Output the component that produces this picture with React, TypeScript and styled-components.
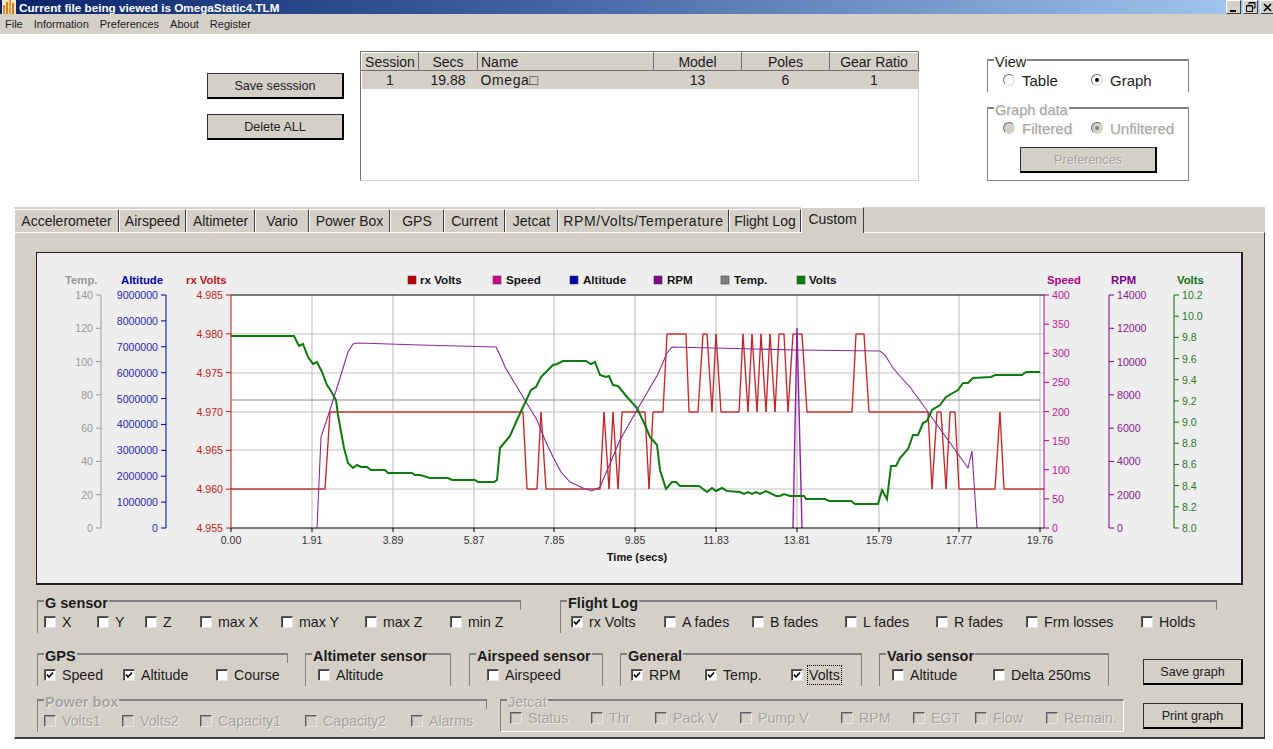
import styled, { createGlobalStyle } from 'styled-components';

const FACE = '#d4d0c8';

const GlobalStyle = createGlobalStyle`
  html, body {
    margin: 0;
    padding: 0;
    background: #fff;
  }
  body {
    font-family: "Liberation Sans", Arial, sans-serif;
    color: #1c1c1c;
  }
`;

const Window = styled.div`
  width: 1273px;
  height: 749px;
  overflow: hidden;
  background: #fff;
`;

const TitleBar = styled.div`
  height: 14px;
  display: flex;
  align-items: center;
  padding-left: 2px;
  background: linear-gradient(90deg, #0a246a 0%, #3d5f9f 40%, #a6caf0 100%);
  color: #fff;
  font-size: 11.7px;
  font-weight: bold;
`;

const TitleText = styled.span`
  margin-left: 3px;
  flex: 1;
`;

const WinButtons = styled.div`
  display: flex;
  gap: 2px;
  margin-right: -2px;
`;

const WinButton = styled.div`
  width: 15px;
  height: 14px;
  box-sizing: border-box;
  background: ${FACE};
  border: 1px solid;
  border-color: #fff #404040 #404040 #fff;
  display: flex;
  align-items: center;
  justify-content: center;
`;

const MenuBar = styled.div`
  height: 20px;
  display: flex;
  align-items: center;
  gap: 11px;
  padding-left: 5px;
  background: ${FACE};
  font-size: 11px;
`;

const TopArea = styled.div`
  height: 173px;
  display: flex;
  align-items: flex-start;
`;

const ButtonColumn = styled.div`
  margin: 39px 0 0 207px;
  display: flex;
  flex-direction: column;
  gap: 15px;
`;

const Button = styled.button<{ $w: number; $h?: number; $mt?: number; $ml?: number }>`
  width: ${(p) => p.$w}px;
  height: ${(p) => p.$h ?? 26}px;
  margin: ${(p) => p.$mt ?? 0}px 0 0 ${(p) => p.$ml ?? 0}px;
  padding: 1px 0 0;
  flex-shrink: 0;
  box-sizing: border-box;
  background: ${FACE};
  border: 1px solid #303030;
  border-right: 2px solid #000;
  border-bottom: 2px solid #000;
  font-family: inherit;
  font-size: 12.6px;
  color: #222;

  &:disabled {
    color: #a2a2a0;
    text-shadow: 1px 1px 0 #ecebe6;
  }
`;

const TableBox = styled.div`
  margin: 17px 0 0 16px;
  width: 559px;
  height: 130px;
  box-sizing: border-box;
  border: 1px solid;
  border-color: #707070 ${FACE} ${FACE} #707070;
`;

const Table = styled.table`
  width: 557px;
  border-collapse: collapse;
  table-layout: fixed;
  font-size: 14px;
`;

const Th = styled.th<{ $left?: boolean }>`
  height: 18px;
  padding: 0 0 0 ${(p) => (p.$left ? 3 : 0)}px;
  box-sizing: border-box;
  font-weight: normal;
  text-align: ${(p) => (p.$left ? 'left' : 'center')};
  background: ${FACE};
  border-top: 1px solid #fff;
  border-left: 1px solid #fff;
  border-right: 1px solid #707070;
  border-bottom: 1px solid #707070;
`;

const Td = styled.td<{ $left?: boolean }>`
  height: 18px;
  padding: 0 0 0 ${(p) => (p.$left ? 3 : 0)}px;
  text-align: ${(p) => (p.$left ? 'left' : 'center')};
  background: ${FACE};
`;

const NameText = styled.span`
  letter-spacing: 0.6px;
`;

const ViewColumn = styled.div`
  margin: 25px 0 0 68px;
  display: flex;
  flex-direction: column;
  gap: 15px;
`;

const Page = styled.div`
  width: 1251px;
  margin-left: 14px;
  background: ${FACE};
`;

const TabStrip = styled.div`
  height: 25px;
  display: flex;
  align-items: flex-start;
`;

const Tab = styled.div<{ $w: number; $active?: boolean; $track?: number }>`
  width: ${(p) => p.$w}px;
  height: ${(p) => (p.$active ? 26 : 23)}px;
  margin-top: ${(p) => (p.$active ? 0 : 2)}px;
  flex-shrink: 0;
  box-sizing: border-box;
  display: flex;
  align-items: center;
  justify-content: center;
  font-size: 14px;
  letter-spacing: ${(p) => p.$track ?? 0}px;
  padding-bottom: ${(p) => (p.$active ? 4 : 0)}px;
  background: ${FACE};
  border-top: 1px solid #fff;
  border-left: 1px solid #fff;
  border-right: 1px solid #404040;
  position: relative;
  z-index: ${(p) => (p.$active ? 1 : 0)};
`;

const PageBody = styled.div`
  height: 507px;
  box-sizing: border-box;
  border-top: 1px solid #fff;
  border-left: 1px solid #fff;
  border-right: 1px solid #404040;
  border-bottom: 2px solid #404040;
  padding: 19px 0 0 21px;
`;

const ChartFrame = styled.div`
  width: 1207px;
  height: 333px;
  box-sizing: border-box;
  background: #eeeeee;
  border: solid #222;
  border-width: 1px 2px 2px 1px;

  svg {
    display: block;
    font-family: "Liberation Sans", Arial, sans-serif;
  }
`;

const GroupRow = styled.div<{ $mt: number }>`
  display: flex;
  align-items: flex-start;
  height: 33px;
  margin-top: ${(p) => p.$mt}px;
`;

const Group = styled.div<{ $w: number; $h?: number; $ml?: number; $pt?: number; $bg?: string; $light?: boolean }>`
  position: relative;
  width: ${(p) => p.$w}px;
  height: ${(p) => p.$h ?? 33}px;
  margin-left: ${(p) => p.$ml ?? 0}px;
  flex-shrink: 0;
  box-sizing: border-box;
  padding-top: ${(p) => p.$pt ?? 8}px;
  background: ${(p) => p.$bg ?? FACE};
  border: 1px solid #808080;
  border-top-width: 2px;
  ${(p) => p.$light && 'border-color: #808080 #fff #fff #808080;'}
`;

const GroupLabel = styled.span<{ $bold?: boolean; $off?: boolean }>`
  position: absolute;
  top: -7px;
  left: 6px;
  padding: 0 1px;
  line-height: 16px;
  background: inherit;
  font-size: 14.5px;
  font-weight: ${(p) => (p.$bold ? 'bold' : 'normal')};
  color: ${(p) => (p.$off ? '#a4a4a0' : '#1c1c1c')};
  ${(p) => p.$off && 'text-shadow: 1px 1px 0 #ecebe6;'}
`;

const ItemRow = styled.div`
  display: flex;
  align-items: flex-start;
  background: inherit;
`;

const Item = styled.div<{ $w: number; $ml: number; $pad: number; $closed?: boolean; $off?: boolean }>`
  width: ${(p) => p.$w}px;
  height: ${(p) => (p.$closed ? 18 : 24)}px;
  margin-left: ${(p) => p.$ml}px;
  padding-left: ${(p) => p.$pad}px;
  flex-shrink: 0;
  box-sizing: border-box;
  display: flex;
  align-items: center;
  background: ${(p) => (p.$closed ? 'transparent' : 'inherit')};
  font-size: 14.2px;
  white-space: nowrap;
  color: ${(p) => (p.$off ? '#a4a4a0' : '#1c1c1c')};
  ${(p) => p.$off && 'text-shadow: 1px 1px 0 #ecebe6;'}
`;

const Check = styled.span<{ $off?: boolean }>`
  width: 12px;
  height: 12px;
  flex-shrink: 0;
  box-sizing: border-box;
  display: flex;
  align-items: center;
  justify-content: center;
  margin-right: 6px;
  background: ${(p) => (p.$off ? FACE : '#fff')};
  border: 1px solid;
  border-color: #5a5a5a #e8e6e0 #e8e6e0 #5a5a5a;
  box-shadow: inset 1px 1px 0 ${(p) => (p.$off ? '#a0a0a0' : '#404040')};
`;

const Radio = styled.span<{ $off?: boolean }>`
  width: 12px;
  height: 12px;
  flex-shrink: 0;
  box-sizing: border-box;
  display: flex;
  align-items: center;
  justify-content: center;
  margin-right: 7px;
  border-radius: 50%;
  background: ${(p) => (p.$off ? FACE : '#fff')};
  border: 1px solid;
  border-color: #6a6a6a #dcdad4 #dcdad4 #6a6a6a;
`;

const RadioDot = styled.span<{ $off?: boolean }>`
  width: 4px;
  height: 4px;
  border-radius: 50%;
  background: ${(p) => (p.$off ? '#808080' : '#000')};
`;

const ItemText = styled.span<{ $focus?: boolean; $big?: boolean }>`
  font-size: ${(p) => (p.$big ? 15 : 14.2)}px;
  ${(p) => p.$focus && 'outline: 1px dotted #000; outline-offset: 1px;'}
`;

type ItemDef = { t: string; l: number; r: number; cb?: number; on?: boolean; focus?: boolean };

const options = (x: number, items: ItemDef[], flags: { closed?: boolean; off?: boolean; radio?: boolean }) => {
  let prev = x + 1;
  return (
    <ItemRow>
      {items.map((it) => {
        const ml = it.l - prev;
        prev = it.r;
        return (
          <Item
            key={it.t}
            $ml={ml}
            $w={it.r - it.l}
            $pad={(it.cb ?? it.l + 1) - it.l}
            $closed={flags.closed}
            $off={flags.off}
          >
            {flags.radio ? (
              <Radio $off={flags.off}>{it.on && <RadioDot $off={flags.off} />}</Radio>
            ) : (
              <Check $off={flags.off}>
                {it.on && (
                  <svg width='8' height='8' viewBox='0 0 8 8'>
                    <path d='M1 3.5 L3 6 L7 1.5' fill='none' stroke='#000' strokeWidth='1.7' />
                  </svg>
                )}
              </Check>
            )}
            <ItemText $focus={it.focus} $big={flags.radio}>
              {it.t}
            </ItemText>
          </Item>
        );
      })}
    </ItemRow>
  );
};

const TABS: [string, number, number?][] = [
  ['Accelerometer', 105],
  ['Airspeed', 67],
  ['Altimeter', 69],
  ['Vario', 54],
  ['Power Box', 81],
  ['GPS', 54],
  ['Current', 61],
  ['Jetcat', 53],
  ['RPM/Volts/Temperature', 171, 0.6],
  ['Flight Log', 72],
  ['Custom', 63],
];

const P = (s: string) => s;

const GREEN = P(
  '231,336 294,336 299,346 303,344 308,357 313,364 317,362 322,372 327,385 331,391 336,400 338,415 344,448 348,463 353,468 357,465 361,467 367,467 371,470 385,470 388,473 412,473 415,475 420,475 430,478 448,478 452,480 475,480 478,482 494,482 497,480 500,448 505,442 510,436 517,420 531,390 536,387 541,377 553,365 557,364 563,361 586,361 591,364 595,362 600,375 606,377 609,376 613,385 618,386 627,397 637,408 645,425 650,437 657,445 660,470 666,489 672,482 676,482 680,486 699,486 707,492 712,488 716,491 722,488 727,491 740,492 744,494 748,492 752,494 756,492 760,494 766,491 776,496 780,496 784,494 790,496 804,496 806,499 825,499 829,501 851,501 855,504 878,504 882,490 887,499 891,466 896,466 900,458 908,449 913,435 918,435 923,423 927,421 932,410 940,405 946,397 958,390 963,383 968,383 973,378 991,377 995,375 1022,375 1026,372 1040,372'
);

const RED = P(
  '231,489 325,489 330,412 523,412 527,489 537,489 541,412 546,489 600,489 604,412 609,489 613,412 618,489 622,412 645,412 649,489 653,412 663,412 667,334 686,334 689,412 698,412 703,334 707,334 712,412 716,334 721,412 739,412 743,334 748,412 752,334 757,412 761,334 766,412 770,334 775,412 779,334 784,334 788,412 793,334 802,334 807,412 852,412 856,334 864,334 869,412 928,412 932,489 937,412 941,412 946,489 950,412 955,412 959,489 995,489 1000,412 1004,489 1044,489'
);

const PURPLE_A = P(
  '317,528 321,437 330,410 340,378 348,352 353,344 358,343 420,345 496,347 500,355 505,367 520,392 537,420 545,440 553,457 561,472 570,482 583,488 592,491 600,487 620,440 637,410 658,374 667,353 672,347 713,348 797,350 880,351 885,355 893,368 898,374 910,387 928,412 968,468 972,451 977,528'
);
const PURPLE_SPIKE = P('793,528 797,328 802,528');

const XTICKS: [number, string][] = [
  [231, '0.00'],
  [312, '1.91'],
  [393, '3.89'],
  [474, '5.87'],
  [554, '7.85'],
  [635, '9.85'],
  [716, '11.83'],
  [797, '13.81'],
  [879, '15.79'],
  [959, '17.77'],
  [1040, '19.76'],
];

const TOP = 295;
const BOTTOM = 528;

type AxisDef = {
  title: string;
  titleX: number;
  x: number;
  side: 'left' | 'right';
  line: string;
  text: string;
  labels: string[];
};

const range = (from: number, step: number, n: number, digits = 0) =>
  Array.from({ length: n }, (_, i) => (from + i * step).toFixed(digits));

const AXES: AxisDef[] = [
  { title: 'Temp.', titleX: 65, x: 101, side: 'left', line: '#999', text: '#999', labels: range(0, 20, 8) },
  { title: 'Altitude', titleX: 121, x: 166, side: 'left', line: '#0000aa', text: '#2a2ab0', labels: range(0, 1000000, 10) },
  { title: 'rx Volts', titleX: 186, x: 231, side: 'left', line: '#b81818', text: '#c02020', labels: range(4.955, 0.005, 7, 3) },
  { title: 'Speed', titleX: 1047, x: 1044, side: 'right', line: '#b00088', text: '#b82098', labels: range(0, 50, 9) },
  { title: 'RPM', titleX: 1111, x: 1109, side: 'right', line: '#800088', text: '#882090', labels: range(0, 2000, 8) },
  { title: 'Volts', titleX: 1177, x: 1174, side: 'right', line: '#107010', text: '#2a7a2a', labels: range(8, 0.2, 12, 1) },
];

const LEGEND: [string, string, number, number][] = [
  ['rx Volts', '#c00000', 408, 420],
  ['Speed', '#d0008c', 493, 506],
  ['Altitude', '#0000b0', 570, 583],
  ['RPM', '#880088', 654, 667],
  ['Temp.', '#808080', 721, 734],
  ['Volts', '#008000', 797, 809],
];

const Axis = ({ a }: { a: AxisDef }) => {
  const n = a.labels.length - 1;
  const dir = a.side === 'left' ? -1 : 1;
  return (
    <g>
      <text x={a.titleX} y={284} fontSize='11.3' fontWeight='bold' fill={a.line}>
        {a.title}
      </text>
      <line x1={a.x} x2={a.x} y1={TOP} y2={BOTTOM} stroke={a.line} strokeWidth='1' />
      {a.labels.map((l, i) => {
        const y = BOTTOM - (i * (BOTTOM - TOP)) / n;
        return (
          <g key={l}>
            <line x1={a.x} x2={a.x + dir * 5} y1={y} y2={y} stroke={a.line} />
            <text
              x={a.x + dir * 8}
              y={y + 4}
              fontSize='10.6'
              fill={a.text}
              textAnchor={a.side === 'left' ? 'end' : 'start'}
            >
              {l}
            </text>
          </g>
        );
      })}
    </g>
  );
};

const Chart = () => (
  <svg width='1204' height='330' viewBox='37 253 1204 330'>
    <rect x='231' y={TOP} width='813' height={BOTTOM - TOP} fill='#fff' />
    {[334, 373, 412, 450, 489].map((y) => (
      <line key={y} x1='231' x2='1044' y1={y} y2={y} stroke='#c4c4c4' strokeWidth='1.2' />
    ))}
    {XTICKS.slice(1).map(([x]) => (
      <line key={x} x1={x} x2={x} y1={TOP} y2={BOTTOM} stroke='#c4c4c4' strokeWidth='1.2' />
    ))}
    <line x1='231' x2='1040' y1='400' y2='400' stroke='#8c8c8c' strokeWidth='1' />
    <polyline points={RED} fill='none' stroke='#e88080' strokeWidth='1.8' opacity='0.6' />
    <polyline points={RED} fill='none' stroke='#b81c1c' strokeWidth='1' />
    <polyline points={PURPLE_A} fill='none' stroke='#8a2a96' strokeWidth='1.1' />
    <polyline points={PURPLE_SPIKE} fill='none' stroke='#9020a0' strokeWidth='1.4' />
    <polyline points={GREEN} fill='none' stroke='#0e7a0e' strokeWidth='2' />
    <line x1='231' x2='1044' y1={TOP} y2={TOP} stroke='#000' />
    <line x1='231' x2='1044' y1={BOTTOM} y2={BOTTOM} stroke='#000' />
    {AXES.map((a) => (
      <Axis key={a.title} a={a} />
    ))}
    {XTICKS.map(([x, l]) => (
      <g key={l}>
        <line x1={x} x2={x} y1={BOTTOM} y2={BOTTOM + 4} stroke='#000' />
        <text x={x} y={544} fontSize='10.6' fill='#333' textAnchor='middle'>
          {l}
        </text>
      </g>
    ))}
    <text x='637' y='561' fontSize='11' fontWeight='bold' fill='#111' textAnchor='middle'>
      Time (secs)
    </text>
    {LEGEND.map(([t, c, sx, tx]) => (
      <g key={t}>
        <rect x={sx} y='276' width='8' height='8' fill={c} stroke='#444' strokeWidth='0.6' />
        <text x={tx} y='284' fontSize='11.6' fontWeight='bold' fill='#111'>
          {t}
        </text>
      </g>
    ))}
  </svg>
);

export default function App() {
  return (
    <Window>
      <GlobalStyle />
      <TitleBar>
        <svg width='14' height='14' viewBox='0 0 14 14'>
          <rect width='14' height='14' fill='#f4e6c8' />
          <rect x='1' y='5' width='2' height='9' fill='#e08a20' />
          <rect x='4' y='2' width='2' height='12' fill='#d87818' />
          <rect x='7' y='0' width='2' height='14' fill='#e89830' />
          <rect x='10' y='3' width='2' height='11' fill='#d87818' />
        </svg>
        <TitleText>Current file being viewed is OmegaStatic4.TLM</TitleText>
        <WinButtons>
          <WinButton>
            <svg width='9' height='9' viewBox='0 0 9 9'>
              <rect x='1' y='7' width='6' height='2' fill='#000' />
            </svg>
          </WinButton>
          <WinButton>
            <svg width='10' height='10' viewBox='0 0 10 10'>
              <path d='M3 2.5V0.5H9V6H7M0.5 3.5H6.5V9.5H0.5Z M3 1H9 M1 4H6' fill='none' stroke='#000' />
            </svg>
          </WinButton>
          <WinButton>
            <svg width='9' height='9' viewBox='0 0 9 9'>
              <path d='M1 1L8 8M8 1L1 8' stroke='#000' strokeWidth='1.6' />
            </svg>
          </WinButton>
        </WinButtons>
      </TitleBar>
      <MenuBar>
        <span>File</span>
        <span>Information</span>
        <span>Preferences</span>
        <span>About</span>
        <span>Register</span>
      </MenuBar>

      <TopArea>
        <ButtonColumn>
          <Button $w={137}>Save sesssion</Button>
          <Button $w={137}>Delete ALL</Button>
        </ButtonColumn>
        <TableBox>
          <Table>
            <colgroup>
              <col style={{ width: 57 }} />
              <col style={{ width: 59 }} />
              <col style={{ width: 176 }} />
              <col style={{ width: 88 }} />
              <col style={{ width: 88 }} />
              <col style={{ width: 89 }} />
            </colgroup>
            <thead>
              <tr>
                <Th>Session</Th>
                <Th>Secs</Th>
                <Th $left>Name</Th>
                <Th>Model</Th>
                <Th>Poles</Th>
                <Th>Gear Ratio</Th>
              </tr>
            </thead>
            <tbody>
              <tr>
                <Td>1</Td>
                <Td>19.88</Td>
                <Td $left>
                  <NameText>Omega□</NameText>
                </Td>
                <Td>13</Td>
                <Td>6</Td>
                <Td>1</Td>
              </tr>
            </tbody>
          </Table>
        </TableBox>
        <ViewColumn>
          <Group $w={202} $pt={7} $bg='#fff'>
            <GroupLabel>View</GroupLabel>
            {options(
              987,
              [
                { t: 'Table', l: 1002, r: 1074 },
                { t: 'Graph', l: 1090, r: 1160, on: true },
              ],
              { radio: true }
            )}
          </Group>
          <Group $w={202} $h={74} $pt={10} $bg='#fff'>
            <GroupLabel $off>Graph data</GroupLabel>
            {options(
              987,
              [
                { t: 'Filtered', l: 1002, r: 1074, cb: 1003 },
                { t: 'Unfiltered', l: 1090, r: 1180, on: true },
              ],
              { radio: true, closed: true, off: true }
            )}
            <Button $w={137} $mt={10} $ml={32} disabled>
              Preferences
            </Button>
          </Group>
        </ViewColumn>
      </TopArea>

      <Page>
        <TabStrip>
          {TABS.map(([t, w, track]) => (
            <Tab key={t} $w={w} $track={track} $active={t === 'Custom'}>
              {t}
            </Tab>
          ))}
        </TabStrip>
        <PageBody>
          <ChartFrame>
            <Chart />
          </ChartFrame>

          <GroupRow $mt={15}>
            <Group $w={484} $ml={1}>
              <GroupLabel $bold>G sensor</GroupLabel>
              {options(
                37,
                [
                  { t: 'X', l: 43, r: 80 },
                  { t: 'Y', l: 96, r: 139 },
                  { t: 'Z', l: 141, r: 185, cb: 145 },
                  { t: 'max X', l: 199, r: 265 },
                  { t: 'max Y', l: 280, r: 349 },
                  { t: 'max Z', l: 364, r: 436 },
                  { t: 'min Z', l: 449, r: 522 },
                ],
                {}
              )}
            </Group>
            <Group $w={657} $ml={39}>
              <GroupLabel $bold>Flight Log</GroupLabel>
              {options(
                560,
                [
                  { t: 'rx Volts', l: 570, r: 648, on: true },
                  { t: 'A fades', l: 663, r: 735 },
                  { t: 'B fades', l: 750, r: 830, cb: 752 },
                  { t: 'L fades', l: 844, r: 921 },
                  { t: 'R fades', l: 935, r: 1015 },
                  { t: 'Frm losses', l: 1024, r: 1137, cb: 1026 },
                  { t: 'Holds', l: 1140, r: 1218 },
                ],
                {}
              )}
            </Group>
          </GroupRow>

          <GroupRow $mt={20}>
            <Group $w={251} $ml={1}>
              <GroupLabel $bold>GPS</GroupLabel>
              {options(
                37,
                [
                  { t: 'Speed', l: 43, r: 106, on: true },
                  { t: 'Altitude', l: 122, r: 200, on: true },
                  { t: 'Course', l: 215, r: 289, cb: 216 },
                ],
                {}
              )}
            </Group>
            <Group $w={146} $ml={17}>
              <GroupLabel $bold>Altimeter sensor</GroupLabel>
              {options(305, [{ t: 'Altitude', l: 317, r: 418 }], {})}
            </Group>
            <Group $w={134} $ml={18}>
              <GroupLabel $bold>Airspeed sensor</GroupLabel>
              {options(469, [{ t: 'Airspeed', l: 486, r: 585 }], {})}
            </Group>
            <Group $w={242} $ml={17}>
              <GroupLabel $bold>General</GroupLabel>
              {options(
                620,
                [
                  { t: 'RPM', l: 630, r: 697, cb: 631, on: true },
                  { t: 'Temp.', l: 704, r: 776, cb: 705, on: true },
                  { t: 'Volts', l: 790, r: 848, on: true, focus: true },
                ],
                {}
              )}
            </Group>
            <Group $w={230} $ml={17}>
              <GroupLabel $bold>Vario sensor</GroupLabel>
              {options(
                879,
                [
                  { t: 'Altitude', l: 891, r: 982 },
                  { t: 'Delta 250ms', l: 992, r: 1097 },
                ],
                {}
              )}
            </Group>
            <Button $w={100} $mt={6} $ml={34}>
              Save graph
            </Button>
          </GroupRow>

          <GroupRow $mt={13}>
            <Group $w={450} $ml={1}>
              <GroupLabel $bold $off>
                Power box
              </GroupLabel>
              {options(
                37,
                [
                  { t: 'Volts1', l: 43, r: 106 },
                  { t: 'Volts2', l: 121, r: 192 },
                  { t: 'Capacity1', l: 199, r: 290 },
                  { t: 'Capacity2', l: 304, r: 396 },
                  { t: 'Alarms', l: 410, r: 488 },
                ],
                { off: true }
              )}
            </Group>
            <Group $w={624} $ml={13} $light>
              <GroupLabel $off>Jetcat</GroupLabel>
              {options(
                500,
                [
                  { t: 'Status', l: 509, r: 590 },
                  { t: 'Thr', l: 590, r: 654 },
                  { t: 'Pack V', l: 654, r: 739 },
                  { t: 'Pump V', l: 739, r: 840 },
                  { t: 'RPM', l: 840, r: 912 },
                  { t: 'EGT', l: 912, r: 974 },
                  { t: 'Flow', l: 974, r: 1045 },
                  { t: 'Remain.', l: 1045, r: 1120 },
                ],
                { off: true, closed: true }
              )}
            </Group>
            <Button $w={100} $mt={4} $ml={19}>
              Print graph
            </Button>
          </GroupRow>
        </PageBody>
      </Page>
    </Window>
  );
}
